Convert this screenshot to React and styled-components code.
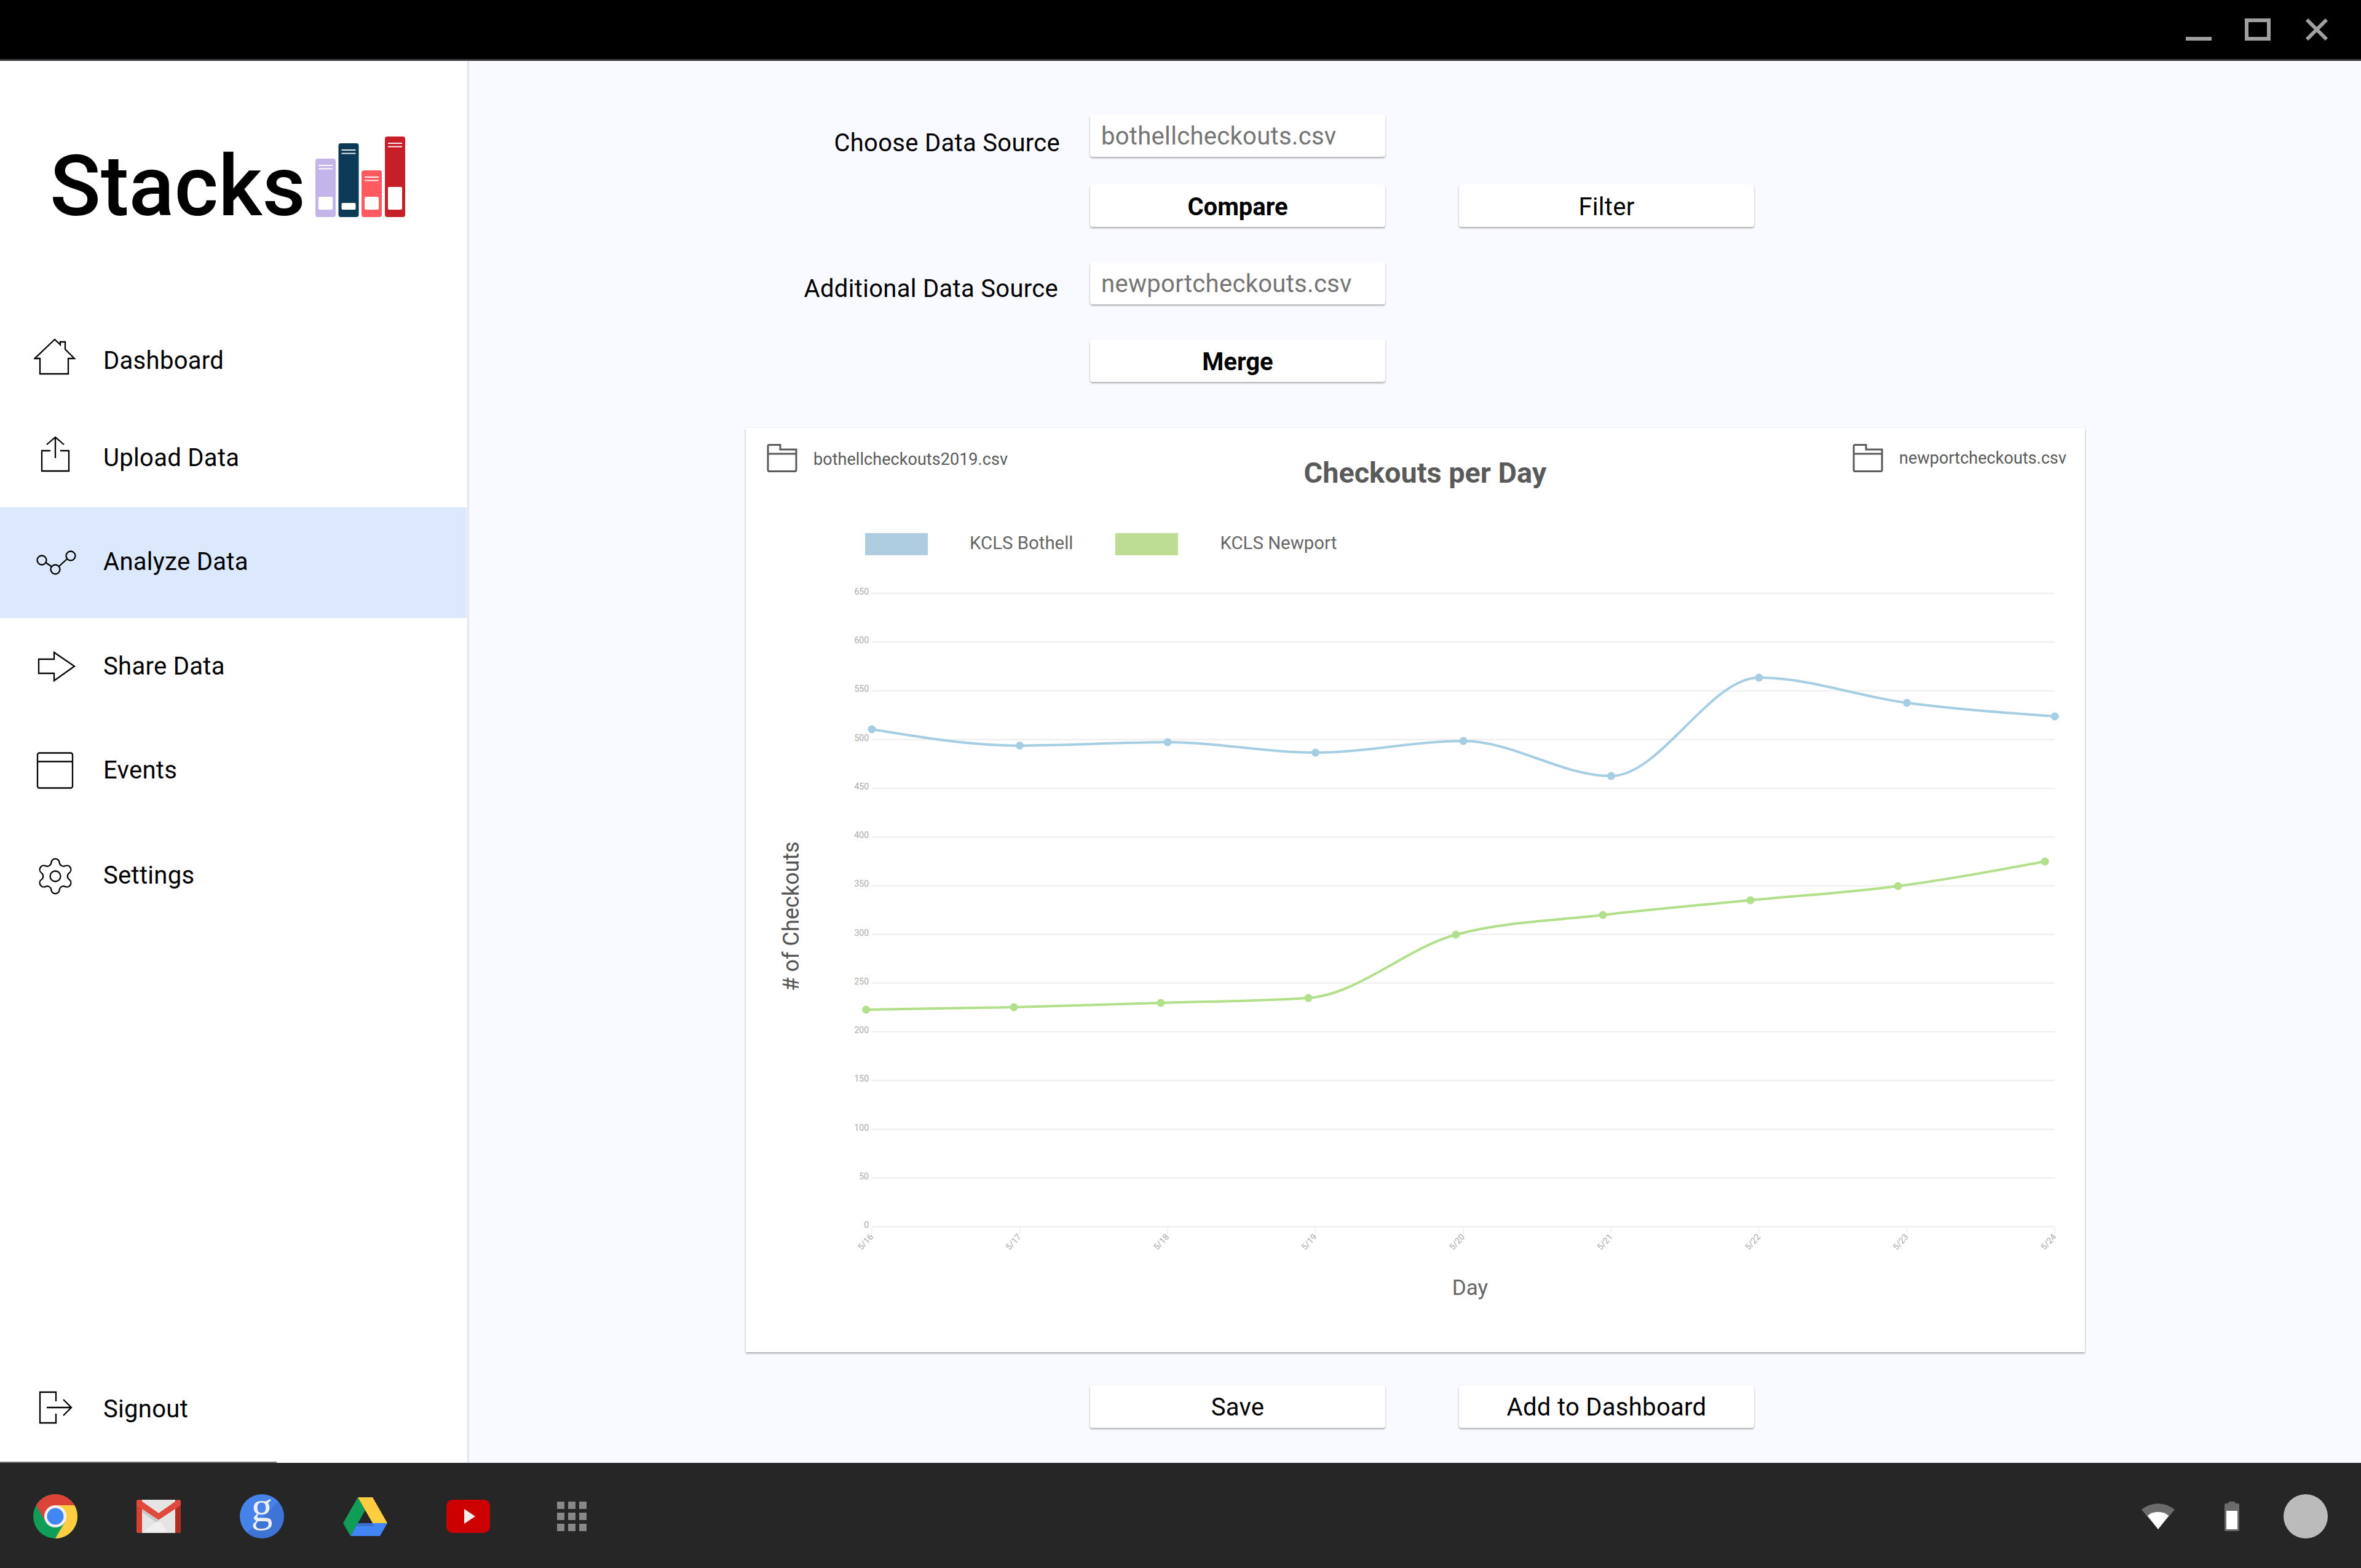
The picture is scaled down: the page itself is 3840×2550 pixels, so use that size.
import React from 'react'
import styled, { createGlobalStyle } from 'styled-components'
import { Settings } from 'lucide-react'

const GlobalStyle = createGlobalStyle`
  html, body {
    margin: 0;
    padding: 0;
    background: #f9faff;
    font-family: Roboto, 'Liberation Sans', sans-serif;
  }
`

const Page = styled.div`
  display: flex;
  flex-direction: column;
  width: 3840px;
  height: 2550px;
  overflow: hidden;
`

const TitleBar = styled.div`
  display: flex;
  flex: none;
  justify-content: flex-end;
  height: 96px;
  padding-right: 54px;
  background: #000;
  border-bottom: 3px solid #3a3a3c;
`

const Body = styled.div`
  display: flex;
  flex: 1;
  min-height: 0;
`

const Sidebar = styled.aside`
  position: relative;
  display: flex;
  flex: none;
  flex-direction: column;
  width: 760px;
  background: #fff;
  box-shadow: 2px 0 3px rgba(60, 70, 100, 0.18);

  &::after {
    content: '';
    position: absolute;
    left: 0;
    bottom: 0;
    width: 450px;
    height: 2px;
    background: #777;
  }
`

const Logo = styled.div`
  display: flex;
  flex: none;
  align-items: flex-start;
  height: 406px;
  padding: 123px 0 0 81px;
  box-sizing: border-box;
`

const LogoText = styled.div`
  width: 432px;
  margin-top: 15px;
  font-size: 137px;
  line-height: 132px;
  font-weight: 500;
  color: #000;
`

const NavItem = styled.div`
  display: flex;
  flex: none;
  align-items: center;
  gap: 43px;
  box-sizing: border-box;
  width: 759px;
  height: ${p => p.$h}px;
  padding: 0 0 ${p => p.$pb || 0}px 55px;
  margin-top: ${p => (p.$bottom ? 'auto' : '0')};
  margin-bottom: ${p => (p.$bottom ? '9px' : '0')};
  background: ${p => (p.$active ? '#dce9fc' : 'transparent')};
  font-size: 40px;
  letter-spacing: 0.3px;
  color: #000;
`

const NavLabel = styled.span`
  padding-top: ${p => (p.$flush ? 0 : 4)}px;
`

const IconBox = styled.div`
  display: flex;
  flex: none;
  align-items: center;
  justify-content: center;
  width: 70px;
  height: 70px;
`

const GearIcon = styled(Settings)`
  margin: 6px 1px 0 0;
`

const Main = styled.main`
  flex: 1;
  min-width: 0;
  padding-top: 87px;
`

const FormRow = styled.div`
  display: flex;
  align-items: center;
  margin-top: ${p => p.$mt || 0}px;
`

const Label = styled.div`
  box-sizing: border-box;
  flex: none;
  width: 964px;
  margin-right: 49px;
  padding: ${p => p.$pt || 0}px ${p => p.$inset || 0}px 0 0;
  text-align: right;
  font-size: 40px;
  line-height: 40px;
  letter-spacing: 0.3px;
  color: #000;
`

const Field = styled.div`
  box-sizing: border-box;
  flex: none;
  width: 480px;
  height: 69px;
  padding: 1px 19px 0 18px;
  display: flex;
  align-items: center;
  background: #fff;
  border-radius: 4px;
  box-shadow: 0 2px 3px rgba(0, 0, 0, 0.32);
  font-size: 40px;
  letter-spacing: 0.3px;
  color: #757575;
`

const Button = styled.div`
  box-sizing: border-box;
  flex: none;
  display: flex;
  align-items: center;
  justify-content: center;
  width: 480px;
  height: 69px;
  margin-left: ${p => p.$ml || 0}px;
  padding-top: ${p => (p.$flat ? 2 : 4)}px;
  background: #fff;
  border-radius: 4px;
  box-shadow: 0 2px 3px rgba(0, 0, 0, 0.32);
  font-size: 40px;
  letter-spacing: ${p => (p.$bold ? 0 : 0.3)}px;
  font-weight: ${p => (p.$bold ? 700 : 400)};
  color: #000;
`

const Card = styled.section`
  display: flex;
  flex-direction: column;
  width: 2178px;
  height: 1503px;
  margin: 75px 0 0 453px;
  background: #fff;
  box-shadow: 0 2px 3px rgba(0, 0, 0, 0.32), 0 0 3px rgba(0, 0, 0, 0.06);
`

const CardHeader = styled.div`
  display: flex;
  flex: none;
  align-items: flex-start;
  box-sizing: border-box;
  height: 171px;
  padding: 26px 30px 0 34px;
`

const FileTag = styled.div`
  display: flex;
  flex: none;
  align-items: center;
  gap: 26px;
  font-size: 27px;
  letter-spacing: 0.05px;
  color: #5a5a5a;
`

const FileName = styled.span`
  padding-top: ${p => p.$pt || 0}px;
`

const ChartTitle = styled.div`
  flex: 1;
  padding: 20px 16px 0 0;
  text-align: center;
  font-size: 46.8px;
  font-weight: 700;
  color: #5a5a5a;
`

const Legend = styled.div`
  display: flex;
  flex: none;
  align-items: center;
  height: 36px;
  margin-left: 194px;
`

const Swatch = styled.div`
  flex: none;
  width: 102px;
  height: 36px;
  background: ${p => p.$color};
`

const LegendLabel = styled.div`
  margin: 0 69px 4px 68px;
  font-size: 29.4px;
  color: #666;
`

const ChartSvg = styled.svg`
  display: block;
  flex: 1;
  min-height: 0;
  font-family: Roboto, 'Liberation Sans', sans-serif;
`

const Shelf = styled.footer`
  display: flex;
  flex: none;
  align-items: center;
  justify-content: space-between;
  box-sizing: border-box;
  height: 171px;
  padding: 3px 54px 0;
  background: #262626;
`

const ShelfGroup = styled.div`
  display: flex;
  align-items: center;
  gap: ${p => p.$gap}px;
`

const ShelfIcon = styled.div`
  display: flex;
  flex: none;
  align-items: center;
  justify-content: center;
  width: ${p => p.$w || 72}px;
  height: 72px;
  margin-right: ${p => p.$mr || 0}px;
`

const GoogleBadge = styled.div`
  box-sizing: border-box;
  display: flex;
  flex: none;
  align-items: center;
  justify-content: center;
  width: 72px;
  height: 72px;
  padding-bottom: 31px;
  border-radius: 50%;
  background: linear-gradient(135deg, #4583ea 0 52%, #3d74d6 52% 100%);
  font-family: 'Liberation Serif', serif;
  font-size: 70px;
  line-height: 40px;
  color: #eee;
`

const AppGrid = styled.div`
  display: grid;
  grid-template-columns: repeat(3, 12px);
  grid-auto-rows: 12px;
  gap: 6px;
`

const AppDot = styled.div`
  background: #888;
`

const Avatar = styled.div`
  width: 72px;
  height: 72px;
  border-radius: 50%;
  background: #bbb;
`

const Line = p => <svg width="70" height="70" viewBox="0 0 70 70" fill="none" stroke="#000" strokeWidth="2.3" {...p} />

const HomeIcon = () => (
  <Line>
    <path d="M10 59V34H1.5L34 3L43 11.5V7H51V19L66 34H56V59Z" />
  </Line>
)

const UploadIcon = () => (
  <Line>
    <path d="M27 26H13V59H57V26H43" />
    <path d="M35 38V4M21 16L35 4L49 16" />
  </Line>
)

const AnalyzeIcon = () => (
  <Line>
    <circle cx="13" cy="35" r="7.5" />
    <circle cx="35" cy="50" r="7.5" />
    <circle cx="60" cy="28" r="7.5" />
    <path d="M19.5 39L29 45.5M41 45L54 33" />
  </Line>
)

const ShareIcon = () => (
  <Line>
    <path d="M8 26H33V15L66 37.5L33 61V49H8Z" />
  </Line>
)

const EventsIcon = () => (
  <Line>
    <rect x="6" y="8.5" width="57" height="57" rx="3" />
    <path d="M6 22.5H63" />
  </Line>
)

const SignoutIcon = () => (
  <Line>
    <path d="M36 23V8H10V58H36V43" />
    <path d="M21 33H61M48 20L61 33L48 46" />
  </Line>
)

const FolderIcon = () => (
  <svg width="50" height="46" viewBox="0 0 50 46" fill="none" stroke="#5a5a5a" strokeWidth="3">
    <path d="M2 3.5Q2 1.5 4 1.5H22V9H48V42Q48 44.5 46 44.5H4Q2 44.5 2 42Z" />
    <path d="M2 16H48" />
  </svg>
)

const MinimizeGlyph = () => (
  <svg width="42" height="96" viewBox="0 0 42 96"><rect y="60" width="42" height="6" fill="#a0a0a0" /></svg>
)

const MaximizeGlyph = () => (
  <svg width="42" height="96" viewBox="0 0 42 96"><rect x="3" y="33" width="36" height="30" fill="none" stroke="#a0a0a0" strokeWidth="6" /></svg>
)

const CloseGlyph = () => (
  <svg width="36" height="96" viewBox="0 0 36 96"><path d="M2 32L34 64M34 32L2 64" stroke="#a0a0a0" strokeWidth="6" /></svg>
)

const WindowGlyphs = styled.div`
  display: flex;
  gap: 54px;
  & > svg:last-child { margin-left: 3px; }
`

const BooksLogo = styled.svg`
  flex: none;
`

const books = [
  { x: 0, y: 36, h: 95, color: '#c3b5ea', tab: 21 },
  { x: 37.5, y: 11, h: 120, color: '#0d3a56', tab: 11 },
  { x: 75, y: 55, h: 76, color: '#ff5a60', tab: 21 },
  { x: 113, y: 0, h: 131, color: '#c71f28', tab: 37 },
]

const Books = () => (
  <BooksLogo width="146" height="131" viewBox="0 0 146 131">
    {books.map(b => (
      <g key={b.x}>
        <rect x={b.x} y={b.y} width="33" height={b.h} rx="4" fill={b.color} />
        <rect x={b.x + 5} y={b.y + 10} width="23" height="2" fill="#fff" opacity="0.9" />
        <rect x={b.x + 5} y={b.y + 15.5} width="23" height="2" fill="#fff" opacity="0.9" />
        <rect x={b.x + 5} y={b.y + b.h - 12 - b.tab} width="23" height={b.tab} rx="2" fill="#fff" />
      </g>
    ))}
  </BooksLogo>
)

const ChromeLogo = () => (
  <svg width="72" height="72" viewBox="0 0 72 72">
    <circle cx="36" cy="36" r="36" fill="#0f9d58" />
    <path d="M4.8 18A36 36 0 0 1 67.2 18H36L20.4 45Z" fill="#db4437" />
    <path d="M67.2 18A36 36 0 0 1 36 72L51.6 45L36 18Z" fill="#ffcd40" />
    <circle cx="36" cy="36" r="18" fill="#f1f1f1" />
    <circle cx="36" cy="36" r="13.5" fill="#4285f4" />
  </svg>
)

const GmailLogo = () => (
  <svg width="72" height="54" viewBox="0 0 72 54">
    <rect width="72" height="54" rx="4" fill="#e4e4e4" />
    <path d="M9 54L31 37L36 37L41 37L50 54Z" fill="#efefef" />
    <path d="M9 14L36 32.7L44 27L32 37L9 20Z" fill="#c9c9c9" />
    <path d="M4 0H9V54H4Q0 54 0 50V4Q0 0 4 0Z" fill="#d54031" />
    <path d="M63 0H68Q72 0 72 4V50Q72 54 68 54H63Z" fill="#b02e1f" />
    <path d="M5 0L36 21.7L67 0Q72 0 72 4V9L36 32.7L0 9V4Q0 0 5 0Z" fill="#e04a3c" />
  </svg>
)

const DriveLogo = () => (
  <svg width="72" height="63" viewBox="0 0 72 63">
    <path d="M24 0L36 21L12 63L0 42Z" fill="#0f9d58" />
    <path d="M24 0H48L72 42H48Z" fill="#ffcd40" />
    <path d="M24 42H72L60 63H12Z" fill="#4285f4" />
    <path d="M24 42H47L51 47H21Z" fill="#3a6fd0" />
  </svg>
)

const YoutubeLogo = () => (
  <svg width="72" height="54" viewBox="0 0 72 54">
    <rect width="71" height="54" rx="10" fill="#cc0000" />
    <path d="M29 15L47 27L29 39Z" fill="#eee" />
  </svg>
)

const WifiIcon = () => (
  <svg width="54" height="42" viewBox="0 0 54 42">
    <path d="M0 10A42 42 0 0 1 54 10L27 42Z" fill="#6b6b6b" />
    <path d="M9.7 20A27 27 0 0 1 44.3 20L27 42Z" fill="#fff" />
  </svg>
)

const BatteryIcon = () => (
  <svg width="24" height="48" viewBox="0 0 24 48">
    <path d="M6 3Q6 0 9 0H15Q18 0 18 3H22Q24 3 24 5V46Q24 48 22 48H2Q0 48 0 46V5Q0 3 2 3Z" fill="#6b6b6b" />
    <rect x="3" y="15" width="18" height="30" fill="#fff" />
  </svg>
)

// chart data, in page pixels
const yTicks = [650, 600, 550, 500, 450, 400, 350, 300, 250, 200, 150, 100, 50, 0]
const yOf = v => 1995 - v * 1.5846
const xTicks = ['5/16', '5/17', '5/18', '5/19', '5/20', '5/21', '5/22', '5/23', '5/24']
const xOf = i => 1418 + i * 240.5

const blue = [1186, 1212.5, 1207, 1224, 1205, 1262, 1102, 1143, 1165].map((y, i) => [xOf(i), y])
const green = [
  [1408.7, 1642], [1649, 1638], [1888, 1631], [2128, 1623], [2368, 1520],
  [2607, 1488], [2847, 1464], [3087, 1441], [3326, 1401],
]

// monotone cubic through the points, flat at each turn like the original chart
const monotone = pts => {
  const last = pts.length - 1
  const slopes = pts.map((p, i) => {
    if (i === 0 || i === last) return null
    const h0 = p[0] - pts[i - 1][0]
    const h1 = pts[i + 1][0] - p[0]
    const s0 = (p[1] - pts[i - 1][1]) / h0
    const s1 = (pts[i + 1][1] - p[1]) / h1
    const mid = (s0 * h1 + s1 * h0) / (h0 + h1)
    return (Math.sign(s0) + Math.sign(s1)) * Math.min(Math.abs(s0), Math.abs(s1), 0.5 * Math.abs(mid))
  })
  const edge = (a, b, t) => (3 * (b[1] - a[1]) / (b[0] - a[0]) - t) / 2
  slopes[0] = edge(pts[0], pts[1], slopes[1])
  slopes[last] = edge(pts[last - 1], pts[last], slopes[last - 1])
  return pts.reduce((d, p, i) => {
    if (i === 0) return `M${p[0]} ${p[1]}`
    const q = pts[i - 1]
    const dx = (p[0] - q[0]) / 3
    return `${d}C${q[0] + dx} ${q[1] + dx * slopes[i - 1]} ${p[0] - dx} ${p[1] - dx * slopes[i]} ${p[0]} ${p[1]}`
  }, '')
}

const Series = ({ pts, color }) => (
  <g>
    <path d={monotone(pts)} fill="none" stroke={color} strokeWidth="4" />
    {pts.map(p => <circle key={p[0]} cx={p[0]} cy={p[1]} r="6.5" fill={color} />)}
  </g>
)

const Chart = () => (
  <ChartSvg viewBox="1213 903 2178 1296">
    {yTicks.map(v => (
      <g key={v}>
        <line x1="1418" x2="3342" y1={yOf(v)} y2={yOf(v)} stroke="#f0f0f0" strokeWidth="2.5" />
        <text x="1413" y={yOf(v) + 2} textAnchor="end" fontSize="14" fill="#aaa">{v}</text>
      </g>
    ))}
    {xTicks.map((t, i) => (
      <g key={t}>
        <line x1={xOf(i)} x2={xOf(i)} y1="1995" y2="2006" stroke="#eee" strokeWidth="1.5" />
        <text
          x={xOf(i) + 3}
          y="2012"
          textAnchor="end"
          fontSize="14"
          fill="#aaa"
          transform={`rotate(-48 ${xOf(i) + 3} 2012)`}
        >
          {t}
        </text>
      </g>
    ))}
    <Series pts={blue} color="#a6cee3" />
    <Series pts={green} color="#b2df8a" />
    <text
      x="1299"
      y="1490"
      textAnchor="middle"
      fontSize="36"
      fill="#555"
      transform="rotate(-90 1299 1490)"
    >
      # of Checkouts
    </text>
    <text x="2391" y="2106" textAnchor="middle" fontSize="35" fill="#666">Day</text>
  </ChartSvg>
)

const App = () => (
  <Page>
    <GlobalStyle />
    <TitleBar>
      <WindowGlyphs>
        <MinimizeGlyph />
        <MaximizeGlyph />
        <CloseGlyph />
      </WindowGlyphs>
    </TitleBar>
    <Body>
      <Sidebar>
        <Logo>
          <LogoText>Stacks</LogoText>
          <Books />
        </Logo>
        <NavItem $h={158}><IconBox><HomeIcon /></IconBox><NavLabel>Dashboard</NavLabel></NavItem>
        <NavItem $h={162} $pb={4}><IconBox><UploadIcon /></IconBox><NavLabel>Upload Data</NavLabel></NavItem>
        <NavItem $h={180} $pb={8} $active><IconBox><AnalyzeIcon /></IconBox><NavLabel>Analyze Data</NavLabel></NavItem>
        <NavItem $h={152}><IconBox><ShareIcon /></IconBox><NavLabel>Share Data</NavLabel></NavItem>
        <NavItem $h={187}><IconBox><EventsIcon /></IconBox><NavLabel>Events</NavLabel></NavItem>
        <NavItem $h={155}>
          <IconBox><GearIcon size={68} strokeWidth={0.8} /></IconBox>
          <NavLabel>Settings</NavLabel>
        </NavItem>
        <NavItem $h={158} $bottom><IconBox><SignoutIcon /></IconBox><NavLabel $flush>Signout</NavLabel></NavItem>
      </Sidebar>
      <Main>
        <FormRow>
          <Label $pt={24}>Choose Data Source</Label>
          <Field>bothellcheckouts.csv</Field>
        </FormRow>
        <FormRow $mt={45}>
          <Label />
          <Button $bold>Compare</Button>
          <Button $ml={120}>Filter</Button>
        </FormRow>
        <FormRow $mt={57}>
          <Label $pt={18} $inset={3}>Additional Data Source</Label>
          <Field>newportcheckouts.csv</Field>
        </FormRow>
        <FormRow $mt={57}>
          <Label />
          <Button $bold>Merge</Button>
        </FormRow>
        <Card>
          <CardHeader>
            <FileTag>
              <FolderIcon />
              <FileName $pt={4}>bothellcheckouts2019.csv</FileName>
            </FileTag>
            <ChartTitle>Checkouts per Day</ChartTitle>
            <FileTag>
              <FolderIcon />
              <FileName>newportcheckouts.csv</FileName>
            </FileTag>
          </CardHeader>
          <Legend>
            <Swatch $color="#aecde1" />
            <LegendLabel>KCLS Bothell</LegendLabel>
            <Swatch $color="#bcdd93" />
            <LegendLabel>KCLS Newport</LegendLabel>
          </Legend>
          <Chart />
        </Card>
        <FormRow $mt={54}>
          <Label />
          <Button $flat>Save</Button>
          <Button $flat $ml={120}>Add to Dashboard</Button>
        </FormRow>
      </Main>
    </Body>
    <Shelf>
      <ShelfGroup $gap={96}>
        <ShelfIcon><ChromeLogo /></ShelfIcon>
        <ShelfIcon><GmailLogo /></ShelfIcon>
        <GoogleBadge>g</GoogleBadge>
        <ShelfIcon><DriveLogo /></ShelfIcon>
        <ShelfIcon><YoutubeLogo /></ShelfIcon>
        <ShelfIcon>
          <AppGrid>
            {Array.from({ length: 9 }, (_, i) => <AppDot key={i} />)}
          </AppGrid>
        </ShelfIcon>
      </ShelfGroup>
      <ShelfGroup $gap={72}>
        <ShelfIcon $w={54} $mr={9}><WifiIcon /></ShelfIcon>
        <ShelfIcon $w={24}><BatteryIcon /></ShelfIcon>
        <Avatar />
      </ShelfGroup>
    </Shelf>
  </Page>
)

export default App
